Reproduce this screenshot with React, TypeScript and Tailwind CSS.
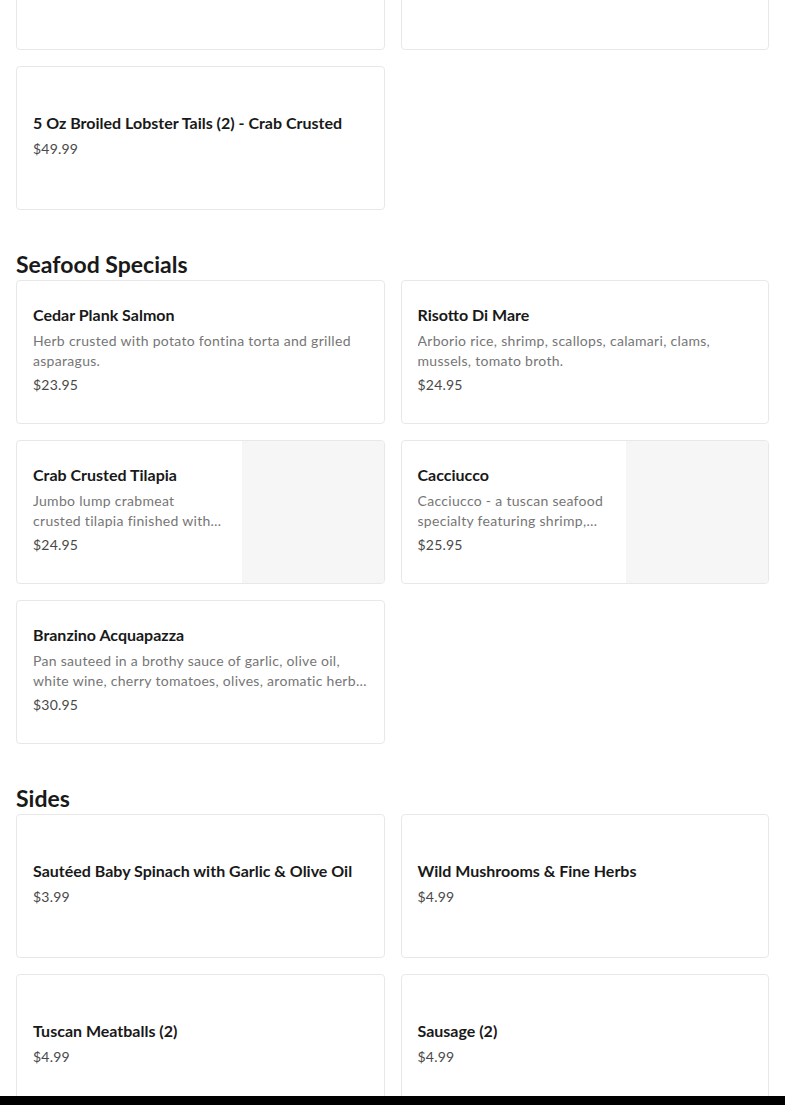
import React from "react";

type Item = { title: string; desc?: string; price: string; img?: boolean };

const Card = ({ item }: { item: Item }) => (
  <div className="flex h-[144px] overflow-hidden rounded-[4px] border border-[#e8e8e8] bg-white">
    <div className="flex min-w-0 flex-1 items-center pb-[4px] pl-[16px] pr-[16px]">
      <div className="min-w-0">
        <div className="text-[16px] font-bold leading-[20px] text-[#191919]">{item.title}</div>
        {item.desc && (
          <div className="mt-[6px] line-clamp-2 text-[14px] leading-[20px] tracking-[0.3px] text-[#767676]">
            {item.desc}
          </div>
        )}
        <div className={`${item.desc ? "mt-[4px]" : "mt-[6px]"} text-[14px] leading-[20px] tracking-[0.2px] text-[#494949]`}>
          {item.price}
        </div>
      </div>
    </div>
    {item.img && <div className="h-full w-[142px] shrink-0 bg-[#f6f6f6]" />}
  </div>
);

const Grid = ({ items }: { items: Item[] }) => (
  <div className="grid grid-cols-2 gap-[16px]">
    {items.map((it, i) => (
      <Card key={i} item={it} />
    ))}
  </div>
);

const Heading = ({ children }: { children: React.ReactNode }) => (
  <h2 className="mt-[42px] h-[28px] text-[23px] font-bold leading-[25px] text-[#191919]">{children}</h2>
);

export default function App() {
  const top: Item[] = [
    { title: "Twin Lobster Tails", price: "$44.99" },
    { title: "Lobster Tail & Filet", price: "$54.99" },
    { title: "5 Oz Broiled Lobster Tails (2) - Crab Crusted", price: "$49.99" },
  ];
  const seafood: Item[] = [
    { title: "Cedar Plank Salmon", desc: "Herb crusted with potato fontina torta and grilled asparagus.", price: "$23.95" },
    { title: "Risotto Di Mare", desc: "Arborio rice, shrimp, scallops, calamari, clams, mussels, tomato broth.", price: "$24.95" },
    {
      title: "Crab Crusted Tilapia",
      desc: "Jumbo lump crabmeat crusted tilapia finished with lemon butter sauce and seasonal vegetables.",
      price: "$24.95",
      img: true,
    },
    {
      title: "Cacciucco",
      desc: "Cacciucco - a tuscan seafood specialty featuring shrimp, scallops, clams and mussels.",
      price: "$25.95",
      img: true,
    },
    {
      title: "Branzino Acquapazza",
      desc: "Pan sauteed in a brothy sauce of garlic, olive oil, white wine, cherry tomatoes, olives, aromatic herbs and capers.",
      price: "$30.95",
    },
  ];
  const sides: Item[] = [
    { title: "Sautéed Baby Spinach with Garlic & Olive Oil", price: "$3.99" },
    { title: "Wild Mushrooms & Fine Herbs", price: "$4.99" },
    { title: "Tuscan Meatballs (2)", price: "$4.99" },
    { title: "Sausage (2)", price: "$4.99" },
  ];
  return (
    <div
      className="flex h-[1105px] flex-col overflow-hidden bg-white"
      style={{ fontFamily: "Lato, 'Noto Sans', sans-serif" }}
    >
      <div className="min-h-0 flex-1 overflow-hidden px-[16px]">
        <div className="-mt-[94px]">
          <Grid items={top} />
          <Heading>Seafood Specials</Heading>
          <Grid items={seafood} />
          <Heading>Sides</Heading>
          <Grid items={sides} />
        </div>
      </div>
      <div className="h-[9px] shrink-0 bg-black" />
    </div>
  );
}
